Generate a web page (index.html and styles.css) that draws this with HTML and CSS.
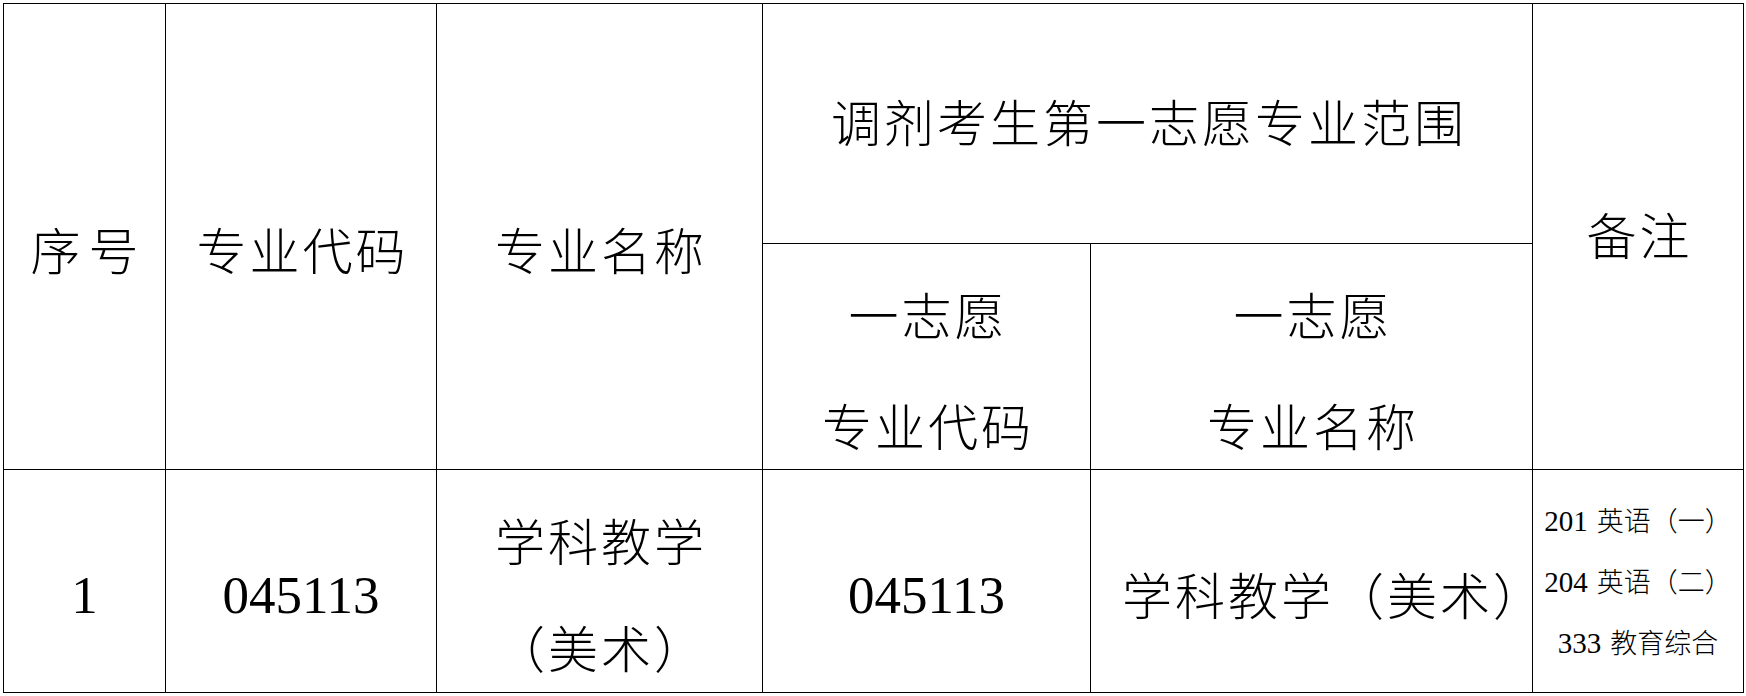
FILE: index.html
```html
<!DOCTYPE html>
<html lang="zh-CN">
<head>
<meta charset="utf-8">
<title>调剂专业范围</title>
<link rel="stylesheet" href="styles.css">
</head>
<body>
<div class="page">
  <table class="grid">
    <colgroup>
      <col class="c1"><col class="c2"><col class="c3"><col class="c4"><col class="c5"><col class="c6">
    </colgroup>
    <tr class="r1">
      <td rowspan="2" class="cjk low wide">序号</td>
      <td rowspan="2" class="cjk low">专业代码</td>
      <td rowspan="2" class="cjk low">专业名称</td>
      <td colspan="2" class="cjk mid">调剂考生第一志愿专业范围</td>
      <td rowspan="2" class="cjk mid">备注</td>
    </tr>
    <tr class="r2">
      <td class="cjk low"><div class="stack"><span>一志愿</span><span>专业代码</span></div></td>
      <td class="cjk low"><div class="stack"><span>一志愿</span><span>专业名称</span></div></td>
    </tr>
    <tr class="r3">
      <td class="num lownum">1</td>
      <td class="num lownum">045113</td>
      <td class="cjk low"><div class="stack stack-b"><span>学科教学</span><span>（美术）</span></div></td>
      <td class="num lownum">045113</td>
      <td class="cjk low paren-fix">学科教学（美术）</td>
      <td class="note">
        <div class="note-line"><span class="d">201</span> 英语（一）</div>
        <div class="note-line"><span class="d">204</span> 英语（二）</div>
        <div class="note-line"><span class="d">333</span> 教育综合</div>
      </td>
    </tr>
  </table>
</div>
</body>
</html>
```
FILE: styles.css
```css
html, body {
  margin: 0;
  padding: 0;
  background: #ffffff;
}

.page {
  padding: 3px 0 0 3px;
}

.grid {
  border-collapse: collapse;
  table-layout: fixed;
  width: 1740px;
  color: #000;
}

.c1 { width: 162px; }
.c2 { width: 271px; }
.c3 { width: 326px; }
.c4 { width: 328px; }
.c5 { width: 442px; }
.c6 { width: 211px; }

.r1 { height: 240px; }
.r2 { height: 226px; }
.r3 { height: 223px; }

.grid td {
  border: 1px solid #000;
  padding: 0;
  text-align: center;
  vertical-align: middle;
}

.cjk {
  font-family: "Noto Sans CJK SC Light", "Noto Sans CJK SC DemiLight", "Noto Sans CJK SC", "Noto Sans", sans-serif;
  font-weight: 300;
  font-size: 50px;
  line-height: 1;
  letter-spacing: 3px;
  text-indent: 3px;
}

.wide {
  letter-spacing: 8px;
  text-indent: 8px;
}

.grid td.low {
  padding-top: 23px;
}

.grid td.mid {
  padding-bottom: 8px;
}

.grid td.lownum {
  padding-top: 28px;
}

.grid td.paren-fix {
  padding-left: 28px;
}

.stack {
  display: flex;
  flex-direction: column;
  align-items: center;
  gap: 61px;
}

.stack-b {
  gap: 57px;
}

.num {
  font-family: "Liberation Serif", "Times New Roman", serif;
  font-size: 53px;
  line-height: 1;
}

.note {
  font-family: "Noto Sans CJK SC Light", "Noto Sans CJK SC DemiLight", "Noto Sans CJK SC", "Noto Sans", sans-serif;
  font-weight: 300;
  font-size: 27px;
  line-height: 60px;
}

.note .d {
  font-family: "Liberation Serif", "Times New Roman", serif;
  font-size: 29px;
  margin-right: 3px;
}
```
